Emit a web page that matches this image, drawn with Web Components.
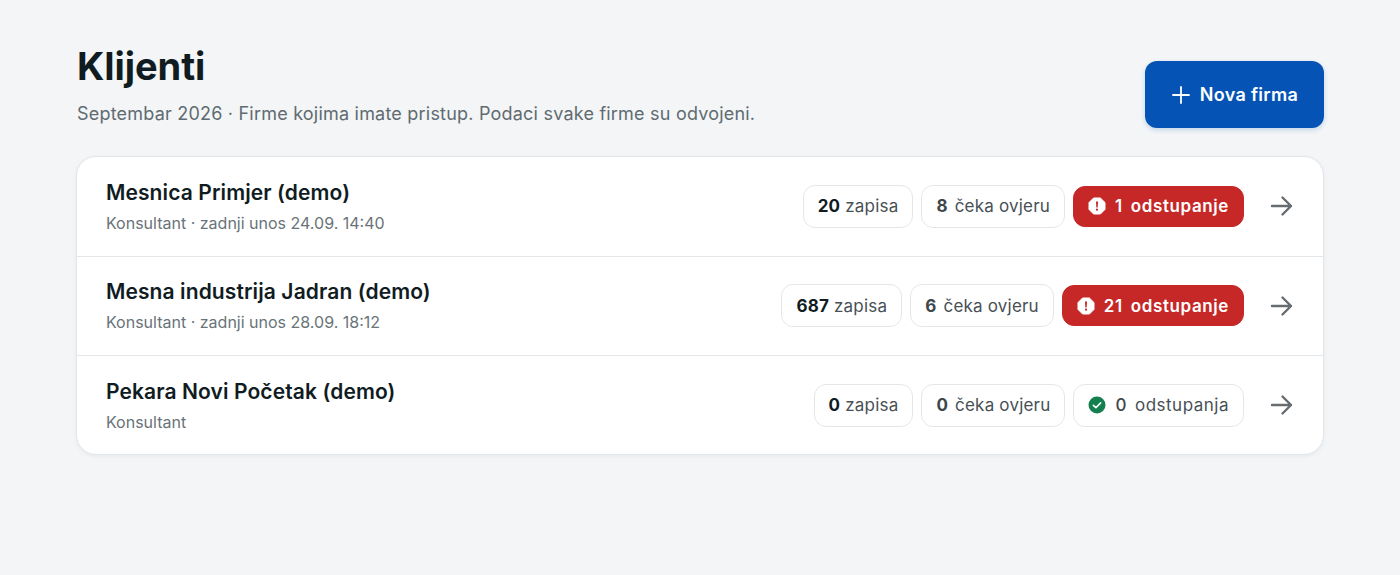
<!DOCTYPE html>
<html lang="hr">
<head>
<meta charset="utf-8">
<title>Klijenti</title>
<style>
  html, body { margin: 0; height: 100%; background: #f3f5f7; }
  body { font-family: Inter, "Noto Sans", sans-serif; }
</style>
</head>
<body>
<clients-page>
  <page-header slot="header" heading="Klijenti" sub="Septembar 2026 · Firme kojima imate pristup. Podaci svake firme su odvojeni.">
    <new-button>Nova firma</new-button>
  </page-header>
  <client-list>
    <client-row name="Mesnica Primjer (demo)" meta="Konsultant · zadnji unos 24.09. 14:40">
      <stat-pill num="20" strong>zapisa</stat-pill>
      <stat-pill num="8">čeka ovjeru</stat-pill>
      <stat-pill num="1" kind="bad">odstupanje</stat-pill>
    </client-row>
    <client-row name="Mesna industrija Jadran (demo)" meta="Konsultant · zadnji unos 28.09. 18:12">
      <stat-pill num="687" strong>zapisa</stat-pill>
      <stat-pill num="6">čeka ovjeru</stat-pill>
      <stat-pill num="21" kind="bad">odstupanje</stat-pill>
    </client-row>
    <client-row name="Pekara Novi Početak (demo)" meta="Konsultant">
      <stat-pill num="0" strong>zapisa</stat-pill>
      <stat-pill num="0">čeka ovjeru</stat-pill>
      <stat-pill num="0" kind="ok">odstupanja</stat-pill>
    </client-row>
  </client-list>
</clients-page>

<script>
class ClientsPage extends HTMLElement {
  constructor() {
    super();
    this.attachShadow({mode: "open"}).innerHTML = `
      <style>
        :host { display: block; padding: 43px 76px 0 76px; }
        .wrap { display: flex; flex-direction: column; gap: 28px; }
      </style>
      <div class="wrap"><slot name="header"></slot><slot></slot></div>`;
  }
}

class PageHeader extends HTMLElement {
  constructor() {
    super();
    this.attachShadow({mode: "open"});
  }
  connectedCallback() {
    this.shadowRoot.innerHTML = `
      <style>
        :host { display: flex; justify-content: space-between; align-items: flex-start; }
        .text { padding-left: 1px; }
        h1 { margin: 0; font-size: 38px; line-height: 46px; font-weight: 700; letter-spacing: -0.05px; color: #101c1f; }
        p { margin: 12px 0 0; font-size: 18px; line-height: 26px; color: #5f6b70; letter-spacing: 0.21px; }
        ::slotted(*) { margin-top: 18px; }
      </style>
      <div class="text">
        <h1>${this.getAttribute("heading")}</h1>
        <p>${this.getAttribute("sub")}</p>
      </div>
      <slot></slot>`;
  }
}

class NewButton extends HTMLElement {
  constructor() {
    super();
    this.attachShadow({mode: "open"}).innerHTML = `
      <style>
        :host { display: inline-flex; align-items: center; gap: 9px; box-sizing: border-box; width: 179px; height: 67px; justify-content: center;
          background: #0553b5; color: #fff; border-radius: 12px; font-size: 18px; font-weight: 600; letter-spacing: 0.3px; box-shadow: 0 2px 5px rgba(5,83,181,.2); }
        svg { width: 20px; height: 20px; }
      </style>
      <svg viewBox="0 0 20 20" fill="none" stroke="currentColor" stroke-width="1.8" stroke-linecap="round"><path d="M10 2v16M2 10h16"/></svg>
      <slot></slot>`;
  }
}

class ClientList extends HTMLElement {
  constructor() {
    super();
    this.attachShadow({mode: "open"}).innerHTML = `
      <style>
        :host { display: block; background: #fff; border: 1px solid #e4e7ea; border-radius: 20px; overflow: hidden; box-shadow: 0 1px 4px rgba(20,30,40,.06); }
      </style>
      <slot></slot>`;
  }
}

class ClientRow extends HTMLElement {
  constructor() {
    super();
    this.attachShadow({mode: "open"});
  }
  connectedCallback() {
    this.shadowRoot.innerHTML = `
      <style>
        :host { display: flex; align-items: center; justify-content: space-between; box-sizing: border-box; height: 99.5px; padding: 0 29px; border-top: 1px solid #e4e7ea; }
        :host(:first-child) { border-top: 0; height: 98.5px; }
        :host(:last-child) { height: 99px; }
        .name { font-size: 21px; line-height: 28px; font-weight: 600; color: #101c1f; letter-spacing: 0.1px; }
        .meta { margin-top: 5px; font-size: 16px; line-height: 22px; color: #697378; }
        .right { display: flex; align-items: center; }
        .pills { display: flex; align-items: center; gap: 8px; }
        svg { width: 26px; height: 26px; margin-left: 24px; color: #666c70; }
      </style>
      <div>
        <div class="name">${this.getAttribute("name")}</div>
        <div class="meta">${this.getAttribute("meta")}</div>
      </div>
      <div class="right">
        <div class="pills"><slot></slot></div>
        <svg viewBox="0 0 26 26" fill="none" stroke="currentColor" stroke-width="2.4" stroke-linecap="round" stroke-linejoin="round"><path d="M4 13h19M14.5 4.5l8.5 8.5-8.5 8.5"/></svg>
      </div>`;
  }
}

class StatPill extends HTMLElement {
  constructor() {
    super();
    this.attachShadow({mode: "open"});
  }
  connectedCallback() {
    const kind = this.getAttribute("kind");
    let icon = "";
    if (kind === "bad") {
      icon = `<svg viewBox="0 0 18 18"><path fill="#fff" d="M5.6 1h6.8L17 5.6v6.8L12.4 17H5.6L1 12.4V5.6z" stroke="#fff" stroke-width="1" stroke-linejoin="round"/><path fill="#c62828" d="M8 4.4h2l-.3 6h-1.4z"/><circle fill="#c62828" cx="9" cy="12.7" r="1.1"/></svg>`;
    } else if (kind === "ok") {
      icon = `<svg viewBox="0 0 18 18"><circle cx="9" cy="9" r="8.5" fill="#14804f"/><path d="M5.4 9.3l2.5 2.4 4.7-4.8" fill="none" stroke="#fff" stroke-width="1.6" stroke-linecap="round" stroke-linejoin="round"/></svg>`;
    }
    this.shadowRoot.innerHTML = `
      <style>
        :host { display: inline-flex; align-items: center; box-sizing: border-box; height: 43px; padding: 0 14px; background: #fff; border: 1px solid #e4e7ea; border-radius: 12px; font-size: 17px; letter-spacing: 0.2px; color: #475055; white-space: nowrap; }
        b { font-weight: 700; color: #3e474b; margin-right: 7px; }
        :host([strong]) b { color: #101c1f; margin-right: 5px; }
        :host([kind="bad"]) { background: #c62828; border-color: #c62828; color: #fff; font-weight: 600; height: 41px; letter-spacing: 0.6px; }
        :host([kind="bad"]) b { color: #fff; font-weight: 600; margin-right: 8px; }
        :host([kind="ok"]) { letter-spacing: 0.5px; }
        :host([kind="ok"]) b { font-weight: 500; margin-right: 8px; }
        svg { width: 18px; height: 18px; margin-right: 9px; }
      </style>
      ${icon}<b>${this.getAttribute("num")}</b><slot></slot>`;
  }
}

customElements.define("clients-page", ClientsPage);
customElements.define("page-header", PageHeader);
customElements.define("new-button", NewButton);
customElements.define("client-list", ClientList);
customElements.define("client-row", ClientRow);
customElements.define("stat-pill", StatPill);
</script>
</body>
</html>
